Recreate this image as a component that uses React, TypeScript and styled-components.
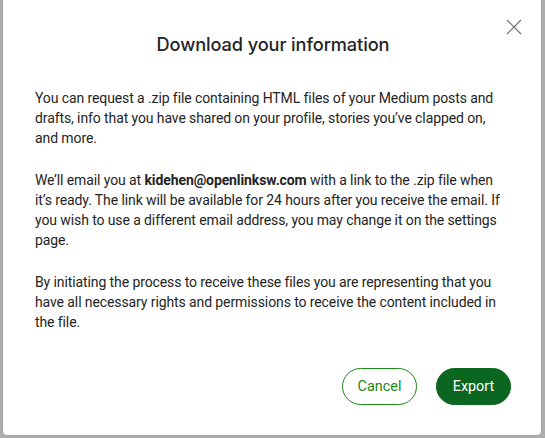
import React from "react";
import styled, { createGlobalStyle } from "styled-components";

const Global = createGlobalStyle`
  html, body {
    margin: 0;
    padding: 0;
    background: #adadad;
    overflow: hidden;
  }
  * { box-sizing: border-box; }
`;

const Overlay = styled.div`
  width: 545px;
  height: 438px;
  padding: 0 4px 3px 3px;
  display: flex;
`;

const Modal = styled.div`
  position: relative;
  flex: 1;
  background: #fff;
  border-radius: 0 0 4px 4px;
  box-shadow: 0 0 0 1px rgba(0, 0, 0, 0.08);
  padding: 32px 30px 30px 32px;
  display: flex;
  flex-direction: column;
  font-family: Inter, "Liberation Sans", sans-serif;
  color: #242424;
`;

const Close = styled.button`
  position: absolute;
  top: 17px;
  right: 17px;
  width: 20px;
  height: 20px;
  padding: 0;
  border: none;
  background: none;
  color: #6b6b6b;
  display: flex;
  align-items: center;
  justify-content: center;
`;

const Title = styled.h2`
  margin: 0 0 32px;
  text-align: center;
  font-size: 18.2px;
  font-weight: 500;
  letter-spacing: -0.1px;
  line-height: 24px;
`;

const Para = styled.p`
  margin: 0 0 22px;
  font-family: Roboto, "Liberation Sans", sans-serif;
  font-size: 14px;
  letter-spacing: -0.1px;
  line-height: 20px;
  b { font-weight: 700; }
`;

const Actions = styled.div`
  margin-top: auto;
  display: flex;
  justify-content: flex-end;
  gap: 19px;
`;

const Btn = styled.button<{ $primary?: boolean }>`
  width: 75px;
  height: 37px;
  border-radius: 99px;
  font-family: Roboto, "Liberation Sans", sans-serif;
  font-size: 14.4px;
  border: 1px solid ${(p) => (p.$primary ? "#0b6720" : "#1a8917")};
  background: ${(p) => (p.$primary ? "#0b6720" : "#fff")};
  color: ${(p) => (p.$primary ? "#fff" : "#1a8917")};
  padding: 0;
`;

export default function App() {
  return (
    <>
      <Global />
      <Overlay>
        <Modal>
          <Close aria-label="Close">
            <svg width="16" height="16" viewBox="0 0 16 16" fill="none" stroke="currentColor" strokeWidth="1.1">
              <path d="M1 1 L15 15 M15 1 L1 15" />
            </svg>
          </Close>
          <Title>Download your information</Title>
          <Para>
            You can request a .zip file containing HTML files of your Medium posts and drafts,
            info that you have shared on your profile, stories you’ve clapped on, and more.
          </Para>
          <Para>
            We’ll email you at <b>kidehen@openlinksw.com</b> with a link to the .zip file when
            it’s ready. The link will be available for 24 hours after you receive the email. If
            you wish to use a different email address, you may change it on the settings page.
          </Para>
          <Para>
            By initiating the process to receive these files you are representing that you have
            all necessary rights and permissions to receive the content included in the file.
          </Para>
          <Actions>
            <Btn>Cancel</Btn>
            <Btn $primary>Export</Btn>
          </Actions>
        </Modal>
      </Overlay>
    </>
  );
}
